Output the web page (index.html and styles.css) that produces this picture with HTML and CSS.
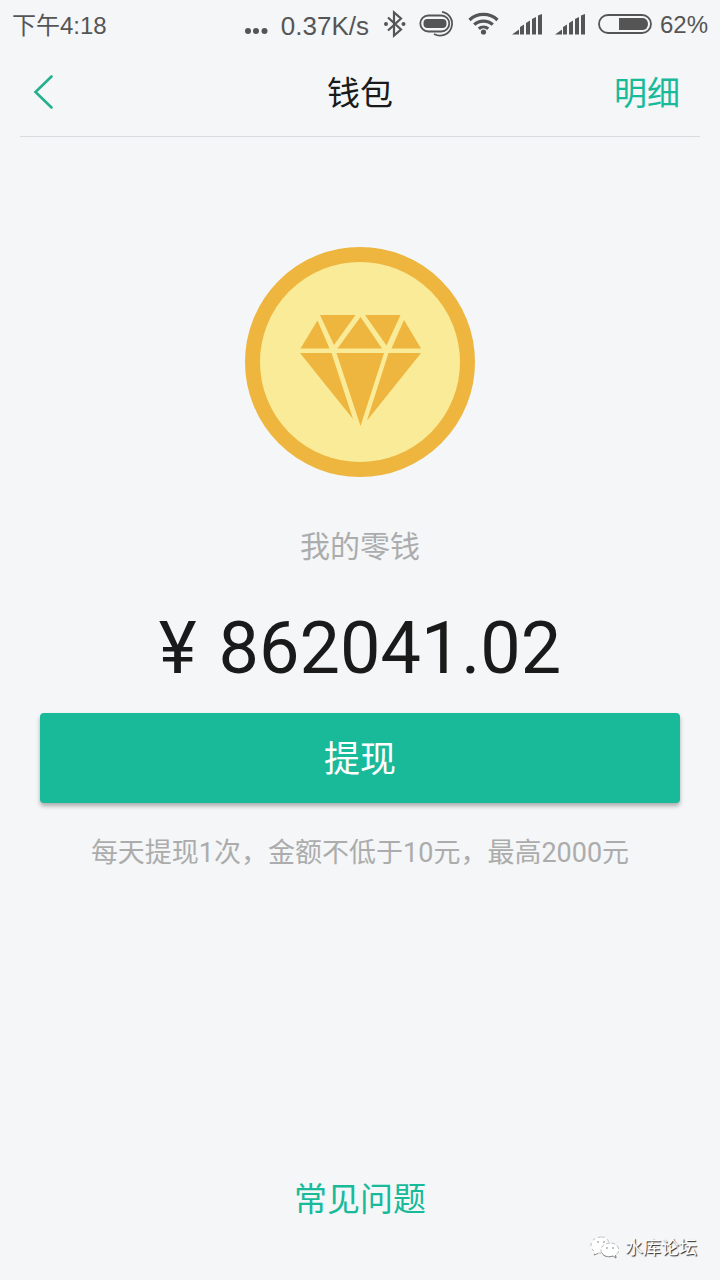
FILE: index.html
```html
<!DOCTYPE html>
<html lang="zh-CN">
<head>
<meta charset="utf-8">
<meta name="viewport" content="width=device-width, initial-scale=1">
<title>钱包</title>
<link rel="stylesheet" href="styles.css">
</head>
<body>
<div class="status">
  <span class="time">下午4:18</span>
  <div class="indicators">
    <svg width="24" height="48" viewBox="0 0 24 48" fill="currentColor"><circle cx="4" cy="31" r="3"/><circle cx="12" cy="31" r="3"/><circle cx="20.500" cy="31" r="3"/></svg>
    <span class="speed">0.37K/s</span>
    <svg width="24" height="48" viewBox="-2 0 24 48" fill="none" stroke="currentColor" stroke-width="2.200"><path d="M4 17.500L17 29.500L10 35.500V12.500L17 18.500L4 30.500"/><g fill="currentColor" stroke="none"><circle cx="2" cy="24" r="2"/><circle cx="19.500" cy="24" r="2"/></g></svg>
    <svg width="36" height="48" viewBox="0 0 36 48" fill="none" stroke="currentColor" stroke-width="1.800"><rect x="1.300" y="15.500" width="29" height="16" rx="8"/><rect x="4.500" y="19" width="23" height="9" rx="4" fill="currentColor" stroke="none"/><path d="M23 11.800A12 12 0 1 1 15 34"/></svg>
    <svg width="31" height="48" viewBox="0 0 31 48" fill="none" stroke="currentColor" stroke-width="3.200"><path d="M1.500 20A20.500 20.500 0 0 1 29.500 20M6.200 24.700A13.700 13.700 0 0 1 24.800 24.700M10.800 28.800A7 7 0 0 1 20.200 28.800"/><circle cx="15.500" cy="32" r="2.600" fill="currentColor" stroke="none"/></svg>
    <svg width="30" height="48" viewBox="0 0 30 48" fill="currentColor"><path d="M0 34.500L7 29.500V34.500ZM8 34.500V27L12 24.500V34.500ZM14 34.500V23L18 20.500V34.500ZM20 34.500V19L24 17V34.500ZM26 34.500V15.500L30 14V34.500Z"/></svg>
    <svg width="30" height="48" viewBox="0 0 30 48" fill="currentColor"><path d="M0 34.500L7 29.500V34.500ZM8 34.500V27L12 24.500V34.500ZM14 34.500V23L18 20.500V34.500ZM20 34.500V19L24 17V34.500ZM26 34.500V15.500L30 14V34.500Z"/></svg>
    <div class="battery">
      <svg width="54" height="48" viewBox="0 0 54 48"><rect x="1" y="15" width="52" height="18" rx="9" fill="none" stroke="currentColor" stroke-width="1.800"/><path d="M21 18H45A5 6 0 0 1 45 30H21Z" fill="currentColor"/></svg>
      <span>62%</span>
    </div>
  </div>
</div>
<header class="header">
  <button class="back" type="button" aria-label="返回"><svg width="22" height="36" viewBox="0 0 22 36" fill="none" stroke="currentColor" stroke-width="2.600" stroke-linecap="round" stroke-linejoin="miter"><path d="M18.500 2.500L2.500 18L18.500 33.500"/></svg></button>
  <h1 class="title">钱包</h1>
  <a class="detail" href="#detail">明细</a>
</header>
<main class="wallet">
  <svg class="coin" width="230" height="230" viewBox="0 0 230 230">
    <circle cx="115" cy="115" r="107.500" fill="#f9eb97" stroke="#eeb53f" stroke-width="15"/>
    <path fill="#eeb53f" d="M75 68H110.500L89 98ZM120 68H155.500L141.500 98.500ZM115.500 70L137 101.500H92.500ZM72.500 73.500L84.500 101.500H55.500ZM159 73L176 101.500H146.500ZM55 106H86.500L108 172ZM91.500 106H139L115.500 179ZM143.500 106H176L122 173.500Z"/>
  </svg>
  <h2 class="label">我的零钱</h2>
  <p class="amount"><span>¥</span> <span>862041.02</span></p>
  <button class="withdraw" type="button">提现</button>
  <p class="note">每天提现1次，金额不低于10元，最高2000元</p>
  <a class="faq" href="#faq">常见问题</a>
</main>
<div class="watermark">
  <svg width="30" height="26" viewBox="0 0 30 26" fill="#fff" stroke="#aaa" stroke-width=".8"><path stroke-dasharray="3 3" d="M11 2C5 2 1 6 1 10.500C1 13 2.500 15 5 17L4 20L8 18C19 20 24 2 11 2Z"/><path stroke-dasharray="4 2" d="M20 8C14 8 11 12 11 15C11 20 16 23 23 21L26 23L25.500 20C32 16 28 8 20 8Z"/><path fill="none" stroke="#777" d="M12 18C14 22 19 22.500 23 21L26 23L25.500 20M4 20L8 18.500"/><g fill="#777" stroke="none"><circle cx="8" cy="7" r=".8"/><circle cx="14" cy="7" r=".8"/><circle cx="17" cy="13" r=".8"/><circle cx="23" cy="13" r=".8"/></g></svg>
  <span>水库论坛</span>
</div>
</body>
</html>
```
FILE: styles.css
```css
* {
  box-sizing: border-box;
}

body {
  margin: 0;
  min-height: 100vh;
  display: flex;
  flex-direction: column;
  position: relative;
  background: #f4f6f8;
  color: #1a1a1a;
  font-family: Roboto, "Noto Sans CJK SC", sans-serif;
}

svg {
  display: block;
  flex: none;
}

a {
  text-decoration: none;
}

h1,
h2,
p {
  margin: 0;
  font-weight: 400;
}

button {
  border: 0;
  font: inherit;
  cursor: pointer;
}

.status {
  display: flex;
  justify-content: space-between;
  height: 48px;
  padding: 0 12px;
  color: #555;
  font-family: "Liberation Sans", "Noto Sans CJK SC", sans-serif;
  font-size: 24px;
  line-height: 50px;
  white-space: nowrap;
}

.indicators {
  display: flex;
  gap: 13px;
}

.time {
  line-height: 52px;
}

.speed {
  font-size: 26px;
  line-height: 52px;
}

.battery {
  display: flex;
  gap: 8px;
}

.header {
  display: grid;
  grid-template-columns: 1fr auto 1fr;
  align-items: center;
  height: 89px;
  margin: 0 20px;
  padding: 0 20px 0 13px;
  border-bottom: 1px solid #d9dcde;
  font-size: 33px;
  line-height: 48px;
}

.back {
  justify-self: start;
  padding: 0;
  background: none;
  color: #27b08f;
}

.title {
  padding: 4px 0 0 7px;
  font-size: 33px;
}

.detail {
  justify-self: end;
  padding-top: 4px;
  color: #18ba9a;
}

.wallet {
  flex: 1;
  display: flex;
  flex-direction: column;
  align-items: center;
  padding: 110px 40px 56px;
}

.label {
  margin-top: 48px;
  color: #acacac;
  font-size: 30px;
  line-height: 44px;
}

.amount {
  display: flex;
  gap: 22px;
  margin-top: 38px;
  font-size: 72px;
  line-height: 84px;
}

.withdraw {
  width: 100%;
  height: 90px;
  margin-top: 22px;
  padding: 0 0 4px;
  border-radius: 4px;
  background: #18ba9a;
  box-shadow: 0 3px 4px rgba(0, 0, 0, 0.3);
  color: #fff;
  font-size: 36px;
}

.note {
  margin-top: 30px;
  color: #acacac;
  font-size: 27px;
  line-height: 40px;
}

.faq {
  margin-top: auto;
  color: #18ba9a;
  font-size: 33px;
  line-height: 48px;
}

.watermark {
  position: absolute;
  right: 23px;
  bottom: 18px;
  display: flex;
  align-items: center;
  gap: 5px;
  color: #fff;
  font-size: 18px;
  line-height: 28px;
  text-shadow: 1px 1px 1px #222;
}
```
